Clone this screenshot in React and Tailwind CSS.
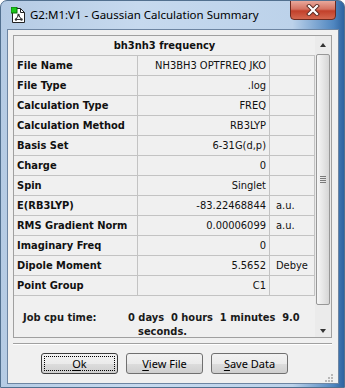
import React from 'react';

const ROWS = [
  ['File Name', 'NH3BH3 OPTFREQ JKO', ''],
  ['File Type', '.log', ''],
  ['Calculation Type', 'FREQ', ''],
  ['Calculation Method', 'RB3LYP', ''],
  ['Basis Set', '6-31G(d,p)', ''],
  ['Charge', '0', ''],
  ['Spin', 'Singlet', ''],
  ['E(RB3LYP)', '-83.22468844', 'a.u.'],
  ['RMS Gradient Norm', '0.00006099', 'a.u.'],
  ['Imaginary Freq', '0', ''],
  ['Dipole Moment', '5.5652', 'Debye'],
  ['Point Group', 'C1', ''],
];

const tahoma = "font-['DejaVu_Sans_Condensed','DejaVu_Sans',sans-serif] text-[11px]";
const segoe = "font-['Noto_Sans','Open_Sans',sans-serif]";

const DocIcon = () => (
  <svg width="15" height="17" viewBox="0 0 15 17" className="shrink-0">
    <path d="M1.5 1.5h8l4 4v10h-12z" fill="#fff" stroke="#222" />
    <path d="M9.5 1.5v4h4" fill="none" stroke="#222" />
    <rect x="0" y="0" width="6" height="6" fill="#19c819" stroke="#0a6e0a" strokeWidth="1" />
    <path d="M7.5 8 5 12.5M7.5 8l3 4.5M5 12.5h5.5" stroke="#333" fill="none" />
    <circle cx="7.5" cy="8" r="1.2" fill="#333" />
    <circle cx="5" cy="12.5" r="1.2" fill="#333" />
    <circle cx="10.5" cy="12.5" r="1.2" fill="#333" />
  </svg>
);

const Button = ({ label, u, focused }) => (
  <button
    className={`relative w-[77px] h-[21px] rounded-[3px] border ${
      focused ? 'border-[#3c3c3c]' : 'border-[#707070]'
    } bg-[linear-gradient(#f2f2f2_0%,#ebebeb_50%,#dddddd_51%,#cfcfcf_100%)] ${segoe} text-[11px] text-black leading-none flex items-center justify-center`}
  >
    {focused && <span className="absolute inset-[2px] border border-dotted border-black" />}
    <span>
      <span className="underline underline-offset-2">{label.slice(0, u)}</span>
      {label.slice(u)}
    </span>
  </button>
);

export default function App() {
  return (
    <div className="w-[345px] h-[388px] flex flex-col overflow-hidden rounded-t-[7px] border border-[#52708f] bg-[linear-gradient(90deg,#b5cbe4_0%,#c6d9ee_40%,#bcd2ea_85%,#4f86c0_97%,#2e63a0_100%)]">
      {/* title bar */}
      <div className="h-[28px] flex items-center pl-[10px] relative">
        <DocIcon />
        <span className={`ml-[4px] ${segoe} text-[11.5px] text-black`}>G2:M1:V1 - Gaussian Calculation Summary</span>
        <div className="absolute right-[8px] top-[-1px] w-[46px] h-[20px] rounded-b-[4px] border border-[#6b2a20] bg-[linear-gradient(#e8a89b_0%,#d47261_45%,#c2402a_55%,#d3674f_100%)] flex items-center justify-center">
          <svg width="14" height="12" viewBox="0 0 14 12">
            <path d="M3 2l8 8M11 2l-8 8" stroke="#5a2a22" strokeWidth="4" strokeLinecap="square" />
            <path d="M3 2l8 8M11 2l-8 8" stroke="#fff" strokeWidth="2.2" strokeLinecap="square" />
          </svg>
        </div>
      </div>

      {/* client area */}
      <div className="ml-[6px] w-[332px] h-[355px] border border-[#6d85a2] bg-[#f0f0f0] flex flex-col">
        <div className="ml-[5px] mt-[5px] w-[319px] h-[303px] border border-[#a0a0a0] flex bg-[#f0f0f0]">
          <div className="w-[301px] flex flex-col">
            <div className={`h-[20px] border-b border-[#c3c3c3] flex items-center justify-center pt-[1px] font-bold text-[#111] ${tahoma}`}>
              bh3nh3 frequency
            </div>
            {ROWS.map(([k, v, unit]) => (
              <div key={k} className={`h-[20px] border-b border-[#c3c3c3] flex ${tahoma} text-[#111]`}>
                <div className="w-[124px] border-r border-[#c3c3c3] pl-[3px] pt-[2px] flex items-center font-bold">{k}</div>
                <div className="w-[132px] border-r border-[#c3c3c3] pr-[3px] pt-[2px] flex items-center justify-end">{v}</div>
                <div className="w-[45px] border-r border-[#c3c3c3] pl-[6px] pt-[2px] flex items-center">{unit}</div>
              </div>
            ))}
            <div className={`flex-1 pt-[15px] font-bold text-[#1a1a1a] leading-[14px] overflow-hidden ${tahoma}`}>
              <div className="flex pl-[9px]">
                <span className="w-[105px]">Job cpu time:</span>
                <span className="whitespace-pre">0 days  0 hours  1 minutes  9.0</span>
              </div>
              <div className="pl-[124px]">seconds.</div>
            </div>
          </div>
          {/* scrollbar */}
          <div className="w-[16px] flex flex-col bg-[#ebebeb]">
            <div className="h-[18px] flex items-center justify-center">
              <span className="w-0 h-0 border-x-[3.5px] border-x-transparent border-b-[4px] border-b-[#333]" />
            </div>
            <div className="mx-[1px] h-[251px] rounded-[2px] border border-[#979797] bg-[linear-gradient(90deg,#f6f6f6,#e3e3e3_60%,#d6d6d6)] flex items-center justify-center">
              <div className="flex flex-col gap-[1px]">
                <span className="w-[6px] h-[1px] bg-[#7a7a7a]" />
                <span className="w-[6px] h-[1px] bg-[#7a7a7a]" />
                <span className="w-[6px] h-[1px] bg-[#7a7a7a]" />
                <span className="w-[6px] h-[1px] bg-[#7a7a7a]" />
              </div>
            </div>
            <div className="flex-1 flex items-end justify-center pb-[4px]">
              <span className="w-0 h-0 border-x-[3.5px] border-x-transparent border-t-[4px] border-t-[#333]" />
            </div>
          </div>
        </div>

        <div className="ml-[5px] mt-[5px] w-[319px] h-[2px] border-t border-[#a0a0a0] border-b border-b-white" />

        <div className="mt-[8px] pl-[33px] flex gap-[8px]">
          <Button label="Ok" u={1} focused />
          <Button label="View File" u={1} />
          <Button label="Save Data" u={1} />
        </div>
        <div className="flex-1 flex items-end justify-end pr-[5px] pb-[4px]">
          <svg width="8" height="8" viewBox="0 0 8 8">
            {[[6, 0], [6, 3], [3, 3], [6, 6], [3, 6], [0, 6]].map(([x, y]) => (
              <rect key={`${x}-${y}`} x={x} y={y} width="2" height="2" fill="#b8b8b8" />
            ))}
          </svg>
        </div>
      </div>
    </div>
  );
}
